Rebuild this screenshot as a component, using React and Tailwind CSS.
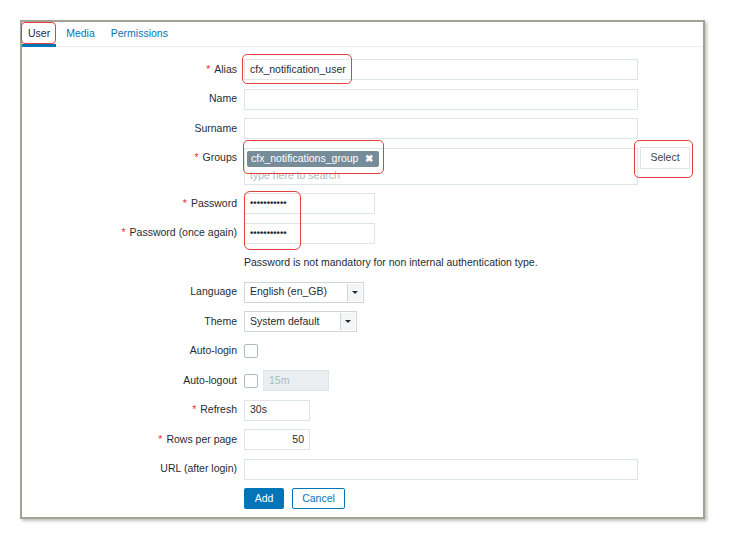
import React from "react";

const font = { fontFamily: '"Liberation Sans", Arial, sans-serif' };

function Label({ required, children }) {
  return (
    <div className="flex items-center justify-end h-full text-[10.5px] text-[#1f2c33] whitespace-nowrap">
      {required && <span className="text-[#e33734] mr-[4px]">*</span>}
      {children}
    </div>
  );
}

function Row({ label, required, children, h = "h-[21px]" }) {
  return (
    <div className={`flex ${h}`}>
      <div className="w-[215px] shrink-0">
        <Label required={required}>{label}</Label>
      </div>
      <div className="ml-[7px] flex items-center flex-1">{children}</div>
    </div>
  );
}

function TextInput({ w, value = "", right, disabled, dots }) {
  return (
    <div
      className={`${w} h-[21px] border border-[#dfe4e7] flex items-center px-[5px] ${
        dots ? "text-[9.5px] font-bold" : "text-[10.5px]"
      } ${disabled ? "bg-[#ebeef0] text-[#acbbc2]" : "bg-white text-[#1f2c33]"} ${right ? "justify-end" : ""}`}
    >
      {value}
    </div>
  );
}

function SelectBox({ w, value }) {
  return (
    <div className={`${w} h-[21px] border border-[#cfd6da] bg-white flex items-center text-[10.5px] text-[#1f2c33]`}>
      <span className="flex-1 pl-[5px]">{value}</span>
      <span className="w-[15px] h-[17px] mr-[1px] border-l border-[#cfd6da] bg-[#f4f5f6] flex items-center justify-center">
        <span className="w-0 h-0 border-l-[3px] border-r-[3px] border-t-[3px] border-l-transparent border-r-transparent border-t-[#1f2c33]" />
      </span>
    </div>
  );
}

function Checkbox() {
  return <div className="w-[14px] h-[14px] border border-[#acbbc2] rounded-[2px] bg-white" />;
}

export default function App() {
  return (
    <div className="relative w-[729px] h-[540px] bg-white" style={font}>
      <div className="absolute left-[20px] top-[20px] w-[685px] h-[499px] border-2 border-[#a2a393] bg-white shadow-[2px_2px_3px_rgba(0,0,0,0.25)] flex flex-col">
        <div className="h-[25px] border-b border-[#ebeef0] flex items-stretch gap-[4px] text-[10.5px]">
          <div className="px-[6px] flex items-center text-[#1f2c33] border-b-[3px] border-[#0275b8] -mb-[1px] pt-[2px]">User</div>
          <div className="px-[6px] flex items-center text-[#0275b8]">Media</div>
          <div className="px-[6px] flex items-center text-[#0275b8]">Permissions</div>
        </div>
        <div className="pt-[12px] flex flex-col gap-[8.5px]">
          <Row label="Alias" required>
            <TextInput w="w-[394px]" value="cfx_notification_user" />
          </Row>
          <Row label="Name">
            <TextInput w="w-[394px]" />
          </Row>
          <Row label="Surname">
            <TextInput w="w-[394px]" />
          </Row>
          <div className="flex h-[37px]">
            <div className="w-[215px] shrink-0 h-[21px]">
              <Label required>Groups</Label>
            </div>
            <div className="ml-[7px] flex items-start">
              <div className="w-[394px] h-[37px] border border-[#dfe4e7] bg-white flex flex-col px-[2px] pt-[2px] overflow-hidden">
                <div className="self-start h-[16px] bg-[#768d99] text-white text-[10.5px] flex items-center pl-[4px] pr-[6px] rounded-[2px]">
                  cfx_notifications_group
                  <span className="ml-[7px] text-[10px] font-bold">✖</span>
                </div>
                <div className="pl-[3px] text-[10.5px] text-[#acbbc2] leading-[15px] mt-[1px]">type here to search</div>
              </div>
              <div className="ml-[2px] -mt-[1px] w-[50px] h-[22px] border border-[#dfe4e7] bg-white flex items-center justify-center text-[10.5px] text-[#3d464d]">
                Select
              </div>
            </div>
          </div>
          <Row label="Password" required>
            <TextInput w="w-[131px]" value="•••••••••••" dots />
          </Row>
          <Row label="Password (once again)" required>
            <TextInput w="w-[131px]" value="•••••••••••" dots />
          </Row>
          <Row label="">
            <span className="text-[10.5px] text-[#1f2c33]">Password is not mandatory for non internal authentication type.</span>
          </Row>
          <Row label="Language">
            <SelectBox w="w-[120px]" value="English (en_GB)" />
          </Row>
          <Row label="Theme">
            <SelectBox w="w-[113px]" value="System default" />
          </Row>
          <Row label="Auto-login">
            <Checkbox />
          </Row>
          <Row label="Auto-logout">
            <Checkbox />
            <div className="ml-[5px]">
              <TextInput w="w-[66px]" value="15m" disabled />
            </div>
          </Row>
          <Row label="Refresh" required>
            <TextInput w="w-[66px]" value="30s" />
          </Row>
          <Row label="Rows per page" required>
            <TextInput w="w-[66px]" value="50" right />
          </Row>
          <Row label="URL (after login)">
            <TextInput w="w-[394px]" />
          </Row>
          <Row label="">
            <div className="w-[40px] h-[21px] bg-[#0275b8] rounded-[2px] text-white text-[10.5px] flex items-center justify-center">Add</div>
            <div className="ml-[8px] w-[53px] h-[21px] border border-[#0275b8] rounded-[2px] bg-white text-[#0275b8] text-[10.5px] flex items-center justify-center">Cancel</div>
          </Row>
        </div>
      </div>

      {/* red annotation boxes */}
      <div className="absolute left-[21px] top-[22px] w-[35px] h-[22px] border-[1.5px] border-[#e2403a] rounded-[4px]" />
      <div className="absolute left-[242px] top-[54px] w-[110px] h-[30px] border-[1.5px] border-[#e2403a] rounded-[5px]" />
      <div className="absolute left-[243px] top-[140px] w-[141px] h-[34px] border-[1.5px] border-[#e2403a] rounded-[5px]" />
      <div className="absolute left-[634px] top-[140px] w-[59px] h-[38px] border-[1.5px] border-[#e2403a] rounded-[5px]" />
      <div className="absolute left-[244px] top-[191px] w-[57px] h-[59px] border-[1.5px] border-[#e2403a] rounded-[6px]" />
    </div>
  );
}
